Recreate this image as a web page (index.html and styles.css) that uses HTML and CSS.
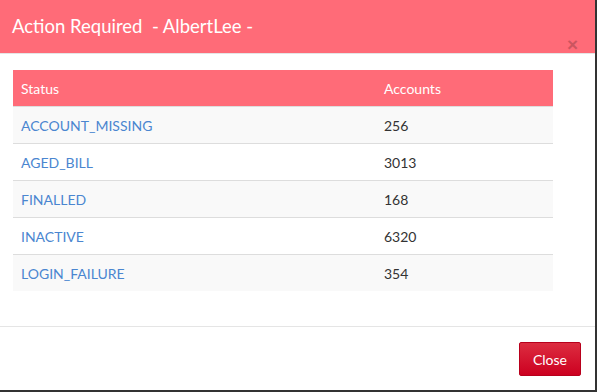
FILE: index.html
```html
<!DOCTYPE html>
<html lang="en">

<head>
    <meta charset="UTF-8" />
    <title>Action Required</title>
    <link rel="stylesheet" href="styles.css">
</head>

<body>

    <div class="modal">
        <div class="modal-header">
            <h4 class="modal-title">Action Required &nbsp;- AlbertLee -</h4>
            <button type="button" class="close">&times;</button>
        </div>

        <div class="modal-body">
            <table class="tabela">
                <thead>
                    <tr>
                        <th>Status</th>
                        <th>Accounts</th>
                    </tr>
                </thead>
                <tbody>
                    <tr>
                        <td><a href="#">ACCOUNT_MISSING</a></td>
                        <td>256</td>
                    </tr>
                    <tr>
                        <td><a href="#">AGED_BILL</a></td>
                        <td>3013</td>
                    </tr>
                    <tr>
                        <td><a href="#">FINALLED</a></td>
                        <td>168</td>
                    </tr>
                    <tr>
                        <td><a href="#">INACTIVE</a></td>
                        <td>6320</td>
                    </tr>
                    <tr>
                        <td><a href="#">LOGIN_FAILURE</a></td>
                        <td>354</td>
                    </tr>
                </tbody>
            </table>
        </div>

        <div class="modal-footer">
            <button type="button" class="btn-close">Close</button>
        </div>
    </div>

</body>

</html>
```

FILE: styles.css
```css
html {
    background-color: #333;
}

body {
    margin: 0;
    font-family: Lato, "Open Sans", sans-serif;
    font-size: 14px;
    color: #333;
}

.modal {
    width: 595px;
    height: 390px;
    background-color: white;
    display: flex;
    flex-direction: column;
}

.modal-header {
    position: relative;
    height: 53px;
    background-color: #ff6b78;
    border-bottom: 1px solid #e5e5e5;
    padding: 0 12px;
    display: flex;
    align-items: center;
}

.modal-title {
    margin: 0 0 1px;
    font-size: 18.5px;
    font-weight: normal;
    color: white;
}

.close {
    position: absolute;
    right: 17px;
    top: 35px;
    border: none;
    background: none;
    padding: 0;
    font-size: 19px;
    font-weight: bold;
    line-height: 1;
    color: #000;
    opacity: 0.2;
    cursor: pointer;
}

.modal-body {
    flex: 1;
    padding: 16px 42px 0 13px;
}

.tabela {
    width: 100%;
    border-collapse: collapse;
}

.tabela th {
    background-color: #ff6b78;
    color: white;
    font-weight: normal;
    text-align: left;
    height: 36px;
    padding: 0 8px;
    border-bottom: 1px solid #ddd;
}

.tabela td {
    height: 36px;
    padding: 0 8px;
    border-top: 1px solid #ddd;
}

.tabela tbody tr:first-child td {
    border-top: none;
}

.tabela th:last-child,
.tabela td:last-child {
    width: 161px;
}

.tabela tbody tr:nth-child(odd) {
    background-color: #f9f9f9;
}

.tabela a {
    color: #4a86d0;
    text-decoration: none;
}

.modal-footer {
    border-top: 1px solid #e5e5e5;
    display: flex;
    justify-content: flex-end;
    padding: 15px 14px 14px 0;
}

.btn-close {
    width: 62px;
    height: 34px;
    font-family: Lato, "Open Sans", sans-serif;
    font-size: 14px;
    color: white;
    background: linear-gradient(#dc2d40, #cc0020);
    border: 1px solid #b8001c;
    border-radius: 2px;
}
```
